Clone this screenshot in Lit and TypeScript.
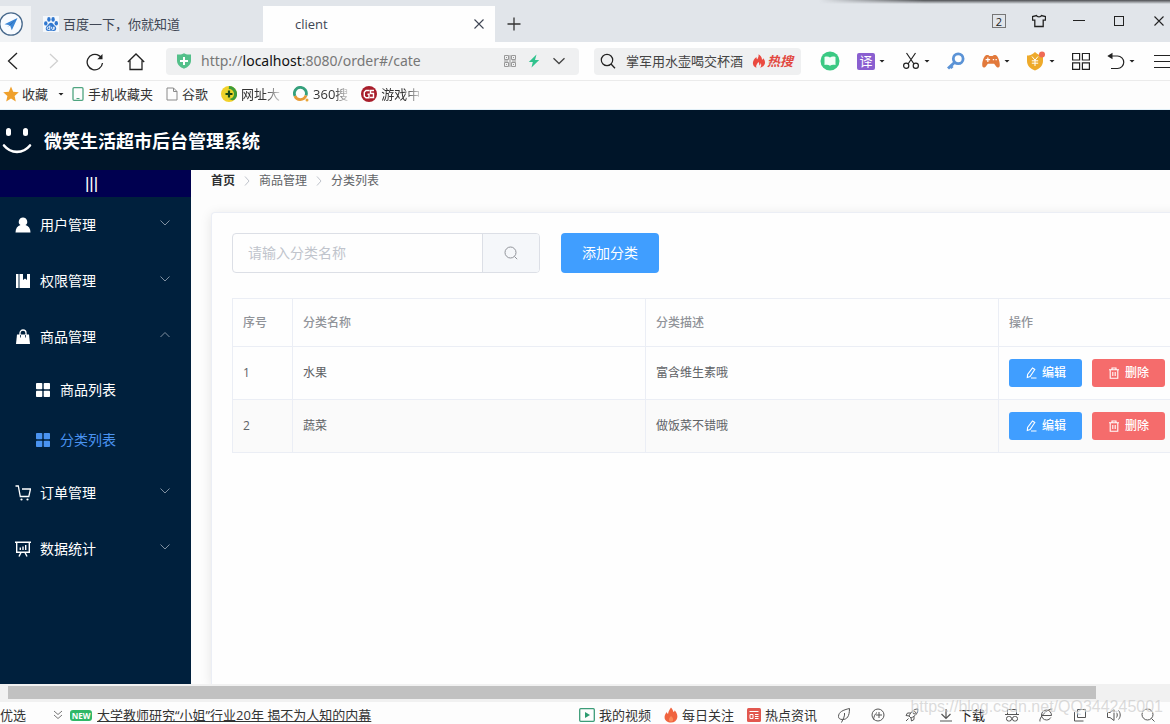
import { LitElement, html, svg, css, TemplateResult } from "lit";
import { customElement, state } from "lit/decorators.js";
import { classMap } from "lit/directives/class-map.js";

const icon = (w: number, h: number, body: TemplateResult, box = `0 0 ${w} ${h}`) =>
  html`<svg width=${w} height=${h} viewBox=${box} fill="none" stroke="currentColor" aria-hidden="true">${body}</svg>`;

const glyphs = {
  plane: icon(24, 24, svg`<circle cx="12" cy="12" r="11.2" fill="#f8fbff" stroke="#48698c" stroke-width="1.3"/><path d="M18.5 6 5.5 12.2l5.5 1 1.800 5z" fill="#3b86d6" stroke="none"/><path d="M18.5 6 11 13.2l-3 2z" fill="#1f5ea8" stroke="none"/>`),
  paw: icon(16, 16, svg`<rect width="16" height="16" fill="#f4f8fc" stroke="none"/><g fill="#3077cf" stroke="none"><ellipse cx="2.8" cy="7.4" rx="1.7" ry="2.2"/><ellipse cx="5.9" cy="3.4" rx="1.7" ry="2.3"/><ellipse cx="10.1" cy="3.4" rx="1.7" ry="2.3"/><ellipse cx="13.3" cy="7.2" rx="1.7" ry="2.2"/><path d="M8 6.8c-1.800 0-2.300 1.900-3.700 3-2.600 2-1.700 5.400 1 5.200 1.800-.2 3.600-.2 5.400 0 2.700.2 3.600-3.200 1-5.200-1.400-1.100-1.900-3-3.700-3z"/></g><path d="M6.800 9.500v4H5.500a1.200 1.200 0 0 1 0-2.600h1.300M8.700 10.800v1.700c0 1.300 2.200 1.300 2.200 0v-1.700 2.900" stroke="#fff" stroke-width=".9"/>`),
  close: icon(14, 14, svg`<path d="m2.500 2.500 9 9m0-9-9 9" stroke-width="1.100"/>`),
  plus: icon(14, 14, svg`<path d="M7 .5v13M.5 7h13" stroke-width="1.300"/>`),
  shirt: icon(14, 14, svg`<path d="M4.500 1.500c.7 1.800 4.300 1.800 5 0l4 1v3.700h-2.300v6.300H2.800V6.200H.5V2.500z" stroke-width="1.300"/>`),
  minimize: icon(14, 14, svg`<path d="M1 6.500h12"/>`),
  maximize: icon(14, 14, svg`<rect x="2.500" y="2.500" width="9" height="9"/>`),
  back: icon(18, 20, svg`<path d="m13 2-8.500 8 8.500 8" stroke-width="1.300"/>`),
  forward: icon(18, 20, svg`<path d="m5 3 7.500 7L5 17" stroke="#d0d0d0" stroke-width="1.300"/>`),
  reload: icon(18, 20, svg`<path d="M16.500 12A7.700 7.700 0 1 1 13 4.600l2 1.400" stroke-width="1.300"/><path d="M16.500 3v5.200h-5.200z" fill="currentColor" stroke="none"/>`),
  home: icon(18, 20, svg`<path d="M.8 11 9 3l8.200 8M3 9.500v9h12v-9" stroke-width="1.300"/>`),
  safe: icon(16, 16, svg`<path d="M1 1.500c4 .2 5 0 7-1.200 2 1.200 3 1.400 7 1.200v6c0 4-3 6.800-7 8.200-4-1.400-7-4.200-7-8.200z" fill="#54c08a" stroke="none"/><path d="M8 4v8M4 8h8" stroke="#fff" stroke-width="2"/>`),
  qr: icon(12, 12, svg`<g stroke="#999"><path d="M.5.5h4v4h-4zM7.500.5h4v4h-4zM.5 7.500h4v4h-4zM7.500 7.500h4v4h-4zM2 2.500h1M9 2.500h1M2 9.500h1M9 9.500h1M0 6h4M6 0v12M8 6h4"/></g>`),
  bolt: icon(12, 14, svg`<path d="M8.500.5.8 8h4L3.500 13.500 11.200 6H7z" fill="#2fc28d" stroke="none"/>`),
  chevron: icon(14, 14, svg`<path d="m1.500 4.200 5.500 5.300 5.500-5.300" stroke="#444" stroke-width="1.300"/>`),
  search: icon(16, 16, svg`<circle cx="7" cy="7" r="5.700" stroke-width="1.200"/><path d="m11 11 4 4.200" stroke-width="1.300"/>`),
  hot: icon(14, 14, svg`<path d="M6.500.3c.5 3-1 3.500-1 5C4.300 5 4.500 3.500 4.500 3 2 5 .5 7.500 1 10c.3 2 2 3.500 3.500 3.800C3.500 11.500 5 10 6.500 8c1 1.500.5 2.500 1 3.500 1-.5 1-1.700 1-2.500 1.200 1.700.8 3.300-.3 4.700C11 13 13 11 13 8.500c0-2-1-3-1.500-4.200-.5.700-.7 1.200-1.500 1.500C10 3.500 8.500 1.500 6.500.3z" fill="#ea4a40" stroke="none"/>`),
  reader: icon(20, 20, svg`<circle cx="10" cy="10" r="9.500" fill="#3ac983" stroke="none"/><path d="M4.500 6c2-.7 4-.7 5.500.5 1.500-1.200 3.500-1.200 5.500-.5v8c-2-.6-4-.5-5.500.7-1.500-1.200-3.500-1.300-5.500-.7z" fill="#f2fff8" stroke="none"/>`),
  scissors: icon(18, 18, svg`<path d="M4.500 1 12 12M13.500 1 6 12" stroke-width="1.200"/><circle cx="4.200" cy="13.800" r="2.600" stroke-width="1.200"/><circle cx="13.800" cy="13.800" r="2.600" stroke-width="1.200"/>`),
  key: icon(18, 18, svg`<circle cx="11.200" cy="6.800" r="4.900" stroke="#5b93d6" stroke-width="2.800"/><path d="m7.500 10.500-6.500 6M3.500 14l2 2" stroke="#5b93d6" stroke-width="3"/>`),
  pad: icon(18, 18, svg`<path d="M4 3c2-1.200 3.500-.3 4.200.4h3.600C12.500 2.700 14 1.800 16 3c2.300 1.500 4.500 9 3.500 12-.8 2-3 1.300-4-.3L13.500 12h-7l-2 2.700c-1 1.600-3.200 2.300-4 .3C-.5 12 1.700 4.500 4 3z" fill="#e2793b" stroke="none"/><path d="M6.500 5v5M4 7.500h5M12 7.500h1.500M15 7.500h1.500" stroke="#fff" stroke-width="1.300"/>`, "0 0 20 18"),
  coin: icon(18, 20, svg`<path d="M0 4.500c4 0 5.500-1.500 8-3.500 2.500 2 4 3.500 8 3.500V10c0 5-3.500 7.500-8 9.500-4.500-2-8-4.500-8-9.500z" fill="#eeaa2b" stroke="none"/><path d="m5 5.500 3 3.700 3-3.700M8 9v6M4.800 9.800h6.400M4.800 12.200h6.400" stroke="#fff"/><circle cx="15" cy="3.500" r="3" fill="#ef6a55" stroke="none"/>`),
  apps: icon(18, 18, svg`<path d="M.6 1.500h7v6.500h-7zM10.400 1.500h7v6.500h-7zM.6 10.900h7v6.500h-7zM10.400 10.900h7v6.500h-7z" stroke-width="1.200"/>`),
  undo: icon(18, 18, svg`<path d="M2 4h8.500a5.800 5.800 0 0 1 0 12.500H4" stroke-width="1.200"/><path d="M5.500.8v6.400L.3 4z" fill="currentColor" stroke="none"/>`),
  burger: icon(18, 18, svg`<path d="M2 3.500h16M2 9.500h16M2 15.500h16" stroke-width="1.200"/>`),
  star: icon(16, 16, svg`<path d="m8 .5 2.200 5.200 5.600.5-4.200 3.700 1.200 5.500L8 12.500l-4.800 2.900 1.200-5.500L.2 6.200l5.600-.5z" fill="#efa02c" stroke="none"/>`),
  phone: icon(12, 14, svg`<rect x="1" y=".7" width="10" height="12.600" rx="1" stroke="#4fa580" stroke-width="1.300"/><path d="M4.500 11.500h3" stroke="#4fa580"/>`),
  page: icon(12, 14, svg`<path d="M1 1h6.500L11 4.500V13H1zM7.500 1v3.500H11" stroke="#8a8a8a"/>`),
  nav360: icon(16, 16, svg`<circle cx="8" cy="8" r="8" fill="#f2d12a" stroke="none"/><path d="M8 0a8 8 0 0 1 6 13.300C12 15 9 14 7 12z" fill="#3d9c3a" stroke="none"/><circle cx="8" cy="8" r="5" fill="#e9d62c" stroke="none"/><path d="M8 4.500v7M4.500 8h7" stroke="#1c4a16" stroke-width="2.200"/>`),
  so: icon(16, 16, svg`<path d="M2 10a6 6 0 1 1 11-.5" stroke="#35a07c" stroke-width="2.800"/><path d="M2 10c1.500 4.500 8.500 5.200 11-.5" stroke="#e79a35" stroke-width="2.800"/><circle cx="14" cy="14" r="1.500" fill="#e9a63a" stroke="none"/>`),
  game: icon(16, 16, svg`<circle cx="8" cy="8" r="8" fill="#a81e2b" stroke="none"/><path d="M8.500 4.500H5L3.300 6.200v4L5 11.700h3V8.300H6.500M13 4.500h-3.500v3h3v4H9" stroke="#fff" stroke-width="1.400"/>`),
  smile: icon(32, 30, svg`<g fill="#fff" stroke="none"><rect x="6" y="2" width="5" height="8" rx="2.500"/><rect x="23" y="2" width="5" height="8" rx="2.500"/></g><path d="M4 19.500c7 8.500 19 8.500 26 0" stroke="#fff" stroke-width="2.600" stroke-linecap="round"/>`),
  user: icon(16, 16, svg`<path d="M8 .5a4.200 4.200 0 0 1 2.500 7.600C13.500 9 15.500 11.500 15.500 15.500H.5C.5 11.500 2.500 9 5.500 8.100A4.200 4.200 0 0 1 8 .5z" fill="#fff" stroke="none"/>`),
  book: icon(16, 16, svg`<path d="M1 1h2.500v14H1zM4.500 1H8v6l2-1.500L12 7V1h3v14H4.500z" fill="#fff" stroke="none"/>`),
  bag: icon(16, 16, svg`<path d="M2 5.500h12l1 9.500H1z" fill="#fff" stroke="none"/><path d="M5 8V4a3 3 0 0 1 6 0v4" stroke="#fff" stroke-width="1.300"/><path d="M5.500 6v2.500M10.500 6v2.500" stroke="#00203d" stroke-width=".8"/>`),
  tiles: icon(16, 16, svg`<g fill="currentColor" stroke="none"><rect x="1" y="1" width="6.300" height="6.300" rx=".8"/><rect x="8.700" y="1" width="6.300" height="6.300" rx=".8"/><rect x="1" y="8.700" width="6.300" height="6.300" rx=".8"/><rect x="8.700" y="8.700" width="6.300" height="6.300" rx=".8"/></g>`),
  cart: icon(16, 16, svg`<path d="M.5 1h2.800l2 10.500h8.500l1.700-7.500H7" stroke="#fff" stroke-width="1.300"/><circle cx="6.500" cy="14.500" r="1.100" fill="#fff" stroke="none"/><circle cx="12.500" cy="14.500" r="1.100" fill="#fff" stroke="none"/>`),
  board: icon(16, 16, svg`<path d="M0 1.200h16M1.700 1.500v9.800h12.600V1.500M6 11.500l-2 4M10 11.500l2 4M5.300 9V6.500M8 9V5.500M10.700 9V4" stroke="#fff" stroke-width="1.400"/>`),
  down: icon(12, 12, svg`<path d="m1.500 3.500 4.500 4.500 4.500-4.500" stroke="#7f8fa0"/>`),
  up: icon(12, 12, svg`<path d="m1.500 8 4.500-4.500 4.500 4.500" stroke="#7f8fa0"/>`),
  right: icon(12, 12, svg`<path d="m4 1.500 4 4.500-4 4.500" stroke="#c0c4cc"/>`),
  find: icon(14, 14, svg`<circle cx="6.500" cy="6.500" r="5.500" stroke="#909399"/><path d="m10.500 10.500 2.700 2.700" stroke="#909399"/>`),
  edit: icon(12, 12, svg`<path d="m7.500 1 2.300 1.500-4.700 7-2.800 1 .3-3zM6 11h5.500" stroke-width="1.100"/>`),
  trash: icon(12, 12, svg`<path d="M1 2.800h10M4 2.500V1h4v1.500M2.200 3v8.200h7.600V3M4.800 5v4M7.200 5v4" stroke-width="1.100"/>`),
  dbl: icon(10, 10, svg`<path d="m1 1 4 3.500L9 1M1 5l4 3.500L9 5" stroke="#777"/>`),
  video: icon(16, 14, svg`<rect x=".7" y=".7" width="14.600" height="12.600" rx="1" stroke="#3c9c78" stroke-width="1.300"/><path d="m6 4 5 3-5 3z" fill="#2c9b70" stroke="none"/>`),
  flame: icon(14, 16, svg`<path d="M7 .5c2 2 2 3.500 2.500 4.500.8-.3 1.200-1 1.200-1.800C13 6 13.800 8.500 13.200 11c-.6 2.500-2.700 4.500-6.200 4.500S1 13.500.6 11C.3 8.500 1.500 6.500 2.800 5c.2 1 .5 1.500 1.200 2C4.500 4 5.500 2.500 7 .5z" fill="#f0643f" stroke="none"/><path d="M7 9c1.500 1.500 2.500 2.500 2 4.500-.5 1.300-3.500 1.300-4 0C4.500 11.500 6 10.500 7 9z" fill="#fa8a5a" stroke="none"/>`),
  news: icon(14, 14, svg`<rect width="14" height="14" rx="1.500" fill="#e2574f" stroke="none"/><path d="M2.500 3.500h9M3 6.500h3v4H3zM8 6.500h3.500M8 8.500h3.500M8 10.500h3.500" stroke="#fff"/>`),
  leaf: icon(14, 16, svg`<path d="M12.500 1.500C6 3 1.500 5 1.500 9.500c0 2 1.500 3 4 3 4.500 0 7-3 7-11zM7.500 6c.5 3-1 5-3 9.500"/>`),
  boost: icon(14, 14, svg`<circle cx="7" cy="7" r="6"/><path d="M8 4v6M5 7h6M2.500 11.500C3 8 4 6 6 4.500"/>`),
  rocket: icon(14, 14, svg`<path d="M13 1C9 1 6 3.500 4 8l2 2c4.500-2 7-5 7-9zM5.500 5H2.500L1 7.500l3 .5M9 8.500v3L6.500 13 6 10M1 13l2.500-2.500"/><circle cx="9.300" cy="4.700" r="1.200"/>`),
  download: icon(14, 14, svg`<path d="M7 1v9M2.500 6 7 10.500 11.500 6M1 13h12" stroke-width="1.200"/>`),
  spy: icon(14, 14, svg`<path d="M0 6.500h14M2.500 6V1.500h9V6"/><rect x="1.500" y="8.500" width="5" height="4.500" rx="2"/><rect x="7.500" y="8.500" width="5" height="4.500" rx="2"/>`),
  ie: icon(14, 14, svg`<path d="M3 7.500h9.500C12.500 4.500 10.500 2 7.500 2S2.500 4.500 2.500 7s2 5 5 5c2 0 3.500-1 4.300-2.500M1 13.500C-.5 10 8 .5 13.500 1"/>`),
  copy: icon(14, 14, svg`<path d="M4.500 1.500h8v8h-8zM1.500 4v9h9"/>`),
  sound: icon(14, 14, svg`<path d="M.5 4.500h2.500l4-3v11l-4-3H.5zM9.500 4.500c1 1.500 1 3.500 0 5M11.500 2.500c2.300 2.500 2.300 6.500 0 9"/>`),
  lens: icon(14, 14, svg`<circle cx="6.500" cy="6.500" r="5.500"/><path d="m10.500 10.500 3 3"/>`),
};

interface MenuEntry {
  label: string;
  glyph: TemplateResult;
  children?: string[];
}

@customElement("app-root")
export class AppRoot extends LitElement {
  @state() private open = "商品管理";
  @state() private current = "分类列表";

  private readonly menu: MenuEntry[] = [
    { label: "用户管理", glyph: glyphs.user },
    { label: "权限管理", glyph: glyphs.book },
    { label: "商品管理", glyph: glyphs.bag, children: ["商品列表", "分类列表"] },
    { label: "订单管理", glyph: glyphs.cart },
    { label: "数据统计", glyph: glyphs.board },
  ];

  private readonly rows = [
    { name: "水果", note: "富含维生素哦" },
    { name: "蔬菜", note: "做饭菜不错哦" },
  ];

  static styles = css`
    :host {
      display: flex;
      flex-direction: column;
      height: 100vh;
      overflow: hidden;
      position: relative;
      background: #fdfdfd;
      color: #333;
      font: 13px/20px "Open Sans", "Noto Sans CJK SC", sans-serif;
      white-space: nowrap;
    }
    * { box-sizing: border-box; }
    svg { display: block; flex: none; }
    button {
      display: flex;
      align-items: center;
      padding: 0;
      border: 0;
      background: none;
      color: inherit;
      font: inherit;
      cursor: pointer;
    }
    a { color: inherit; text-decoration: none; }
    input { min-width: 0; border: 0; outline: 0; background: none; font: inherit; color: inherit; }

    .titlebar {
      flex: none;
      display: flex;
      height: 42px;
      padding: 6px 4px 0 0;
      background: #e1e5ea;
    }
    .shade {
      position: absolute;
      top: 0;
      right: 0;
      width: 30%;
      height: 4px;
      background: linear-gradient(to bottom, #4b4d50, #4b4d5000);
      mask-image: linear-gradient(to right, transparent, #000 30%);
    }
    .pinned { display: flex; align-items: center; justify-content: flex-end; width: 31px; padding-right: 8px; background: #f1f3f5; }
    .tab { display: flex; align-items: center; gap: 4px; width: 232px; padding: 0 9px 0 12px; color: #3f4654; }
    .tab.active { padding-left: 32px; background: #fefefe; }
    .tab .close { margin-left: auto; }
    .add { margin-left: 12px; }
    .controls { display: flex; align-items: center; gap: 26px; height: 30px; margin-left: auto; color: #222; }
    .count { width: 14px; height: 14px; border: 1px solid #777; font-size: 11px; line-height: 13px; text-align: center; }

    .toolbar { flex: none; display: flex; align-items: center; height: 39px; border-bottom: 1px solid #ebebeb; background: #fefefe; color: #222; }
    .nav { display: flex; gap: 23px; padding: 0 21px 0 4px; }
    .field { display: flex; align-items: center; height: 27px; border-radius: 4px; background: #eff0f1; }
    .address { flex: 1; margin-right: 15px; padding: 0 13px 0 10px; }
    .url { flex: 1; margin-left: 9px; color: #777; font-family: "Noto Sans", sans-serif; font-size: 14px; }
    .url b { font-weight: 400; color: #111; }
    .address button { margin-left: 12px; }
    .query { width: 207px; margin-right: 19px; padding: 0 8px 0 6px; }
    .query input { flex: 1; margin-left: 10px; padding: 0; color: #444; }
    .trend { display: flex; align-items: center; gap: 1px; color: #e2483f; font-weight: 700; font-style: italic; }
    .tools { display: flex; align-items: center; gap: 17px; }
    .tool { gap: 4px; }
    .caret { width: 6px; height: 3px; flex: none; background: #222; clip-path: polygon(0 0, 100% 0, 50% 100%); }
    .translate { width: 18px; height: 17px; border-radius: 2px; background: #8a5fd0; color: #fff; line-height: 16px; text-align: center; }

    .bookmarks { flex: none; display: flex; align-items: center; height: 29px; padding: 0 0 2px 3px; border-bottom: 1px solid #e2f0f8; color: #333; }
    .mark { display: flex; align-items: center; gap: 4px; margin-right: 13px; }
    .mark span { overflow: hidden; }
    .mark .cut { max-width: 39px; mask-image: linear-gradient(to right, #000 60%, #0003); }
    .mark.fav { gap: 3px; margin-right: 8px; }
    .mark.fav .caret { margin-left: 7px; }

    header { flex: none; display: flex; align-items: center; gap: 12px; height: 60px; padding-top: 2px; background: #001529; color: #fff; }
    h1 { margin: 0; font-size: 18px; line-height: 28px; }
    .body { flex: 1; display: flex; min-height: 0; overflow: hidden; }
    aside { flex: none; width: 191px; background: #00203d; color: #fff; font-size: 14px; }
    .collapse { width: 100%; height: 27px; justify-content: center; padding-right: 8px; background: #000050; font: 17px/27px "Liberation Sans", sans-serif; }
    .item { width: 100%; height: 56px; gap: 9px; padding: 0 20px 0 15px; }
    .item span { flex: 1; text-align: left; }
    .item > svg:last-child { margin-bottom: 4px; }
    .sub { height: 50px; padding-left: 35px; }
    .sub.on { color: #4a93f0; }

    main { flex: 1 0 1202px; display: flex; flex-direction: column; min-width: 0; padding: 0 20px; font-size: 12px; color: #606266; }
    .crumbs { display: flex; align-items: center; gap: 6px; height: 22px; margin-bottom: 20px; }
    .crumbs a { color: #303133; font-weight: 700; }
    .card { flex: 1; padding: 20px; border: 1px solid #ebeef5; border-bottom: 0; border-radius: 4px 4px 0 0; box-shadow: 0 2px 12px #0000001a; background: #fefefe; }
    .actions { display: flex; gap: 21px; height: 40px; margin-bottom: 25px; font-size: 14px; }
    .filter { display: flex; width: 308px; border: 1px solid #dcdfe6; border-radius: 4px; overflow: hidden; }
    .filter input { flex: 1; padding: 0 15px; }
    .filter input::placeholder { color: #c0c4cc; }
    .filter button { width: 57px; justify-content: center; border-left: 1px solid #dcdfe6; background: #f5f7fa; }
    .primary { justify-content: center; border-radius: 4px; background: #409eff; color: #fff; }
    .create { width: 98px; }
    table { width: 100%; table-layout: fixed; border: solid #ebeef5; border-width: 1px 0 0 1px; border-spacing: 0; }
    th, td { height: 53px; padding: 0 10px; border: solid #ebeef5; border-width: 0 1px 1px 0; text-align: left; }
    th { height: 48px; color: #909399; font-weight: 500; }
    tr:nth-child(even) td { background: #fafafa; }
    .index { width: 60px; }
    .ops { display: flex; gap: 10px; }
    .ops button { width: 73px; height: 28px; justify-content: center; gap: 5px; border-radius: 3px; font-weight: 500; }
    .danger { background: #f56c6c; color: #fff; }

    .scroll { flex: none; height: 18px; padding: 2px 74px 3px 8px; background: #f1f1f1; }
    .thumb { height: 13px; background: #c1c1c1; }
    footer { flex: none; display: flex; align-items: center; height: 22px; padding: 4px 15px 0 0; background: #fdfdfd; color: #333; }
    .fold { margin: 0 7px 0 27px; }
    .new { width: 22px; margin-right: 5px; border-radius: 3px; background: #2fb867; color: #fff; font-size: 8px; font-weight: 700; line-height: 11px; text-align: center; }
    footer a { text-decoration: underline; }
    .links { display: flex; gap: 13px; margin-left: auto; margin-right: 20px; }
    .links button { gap: 4px; }
    .utils { display: flex; align-items: center; gap: 20px; color: #555; }
    .utils button { gap: 6px; }
    .utils span { color: #222; }
    .watermark { position: absolute; right: 7px; bottom: 7px; color: #c4c4c499; text-shadow: 1px 1px 0 #ffffff99; font: 16px/20px "Liberation Sans", sans-serif; pointer-events: none; }
  `;

  private tool(label: string, glyph: TemplateResult, menu = false) {
    return html`<button class="tool" aria-label=${label}>${glyph}${menu ? html`<i class="caret"></i>` : ""}</button>`;
  }

  private mark(label: string, glyph: TemplateResult, cut = false) {
    return html`<a class="mark" href="#">${glyph}<span class=${classMap({ cut })}>${label}</span></a>`;
  }

  private entry(e: MenuEntry) {
    const opened = e.label === this.open;
    return html`
      <button class="item" aria-expanded=${opened} @click=${() => (this.open = opened ? "" : e.label)}>
        ${e.glyph}<span>${e.label}</span>${opened ? glyphs.up : glyphs.down}
      </button>
      ${opened
        ? e.children?.map(
            (c) => html`<button class=${classMap({ item: true, sub: true, on: c === this.current })} @click=${() => (this.current = c)}>
              ${glyphs.tiles}<span>${c}</span>
            </button>`
          )
        : ""}
    `;
  }

  render() {
    return html`
      <div class="titlebar">
        <div class="pinned">${glyphs.plane}</div>
        <div class="tab">${glyphs.paw}<span>百度一下，你就知道</span></div>
        <div class="tab active"><span>client</span><button class="close" aria-label="关闭标签">${glyphs.close}</button></div>
        <button class="add" aria-label="新标签">${glyphs.plus}</button>
        <div class="controls">
          <span class="count">2</span>
          <button aria-label="皮肤">${glyphs.shirt}</button>
          <button aria-label="最小化">${glyphs.minimize}</button>
          <button aria-label="最大化">${glyphs.maximize}</button>
          <button aria-label="关闭">${glyphs.close}</button>
        </div>
        <div class="shade"></div>
      </div>

      <div class="toolbar">
        <div class="nav">
          <button aria-label="后退">${glyphs.back}</button>
          <button aria-label="前进">${glyphs.forward}</button>
          <button aria-label="刷新">${glyphs.reload}</button>
          <button aria-label="主页">${glyphs.home}</button>
        </div>
        <div class="field address">
          ${glyphs.safe}
          <span class="url">http://<b>localhost</b>:8080/order#/cate</span>
          <button aria-label="二维码">${glyphs.qr}</button>
          <button aria-label="极速模式">${glyphs.bolt}</button>
          <button aria-label="展开">${glyphs.chevron}</button>
        </div>
        <div class="field query">
          ${glyphs.search}
          <input aria-label="搜索" value="掌军用水壶喝交杯酒" />
          <span class="trend">${glyphs.hot}热搜</span>
        </div>
        <div class="tools">
          ${this.tool("阅读", glyphs.reader)}
          ${this.tool("翻译", html`<span class="translate">译</span>`, true)}
          ${this.tool("截图", glyphs.scissors, true)}
          ${this.tool("密码", glyphs.key)}
          ${this.tool("游戏", glyphs.pad, true)}
          ${this.tool("支付", glyphs.coin, true)}
          ${this.tool("应用", glyphs.apps)}
          ${this.tool("恢复", glyphs.undo, true)}
          ${this.tool("菜单", glyphs.burger)}
        </div>
      </div>

      <nav class="bookmarks">
        <a class="mark fav" href="#">${glyphs.star}<span>收藏</span><i class="caret"></i></a>
        ${this.mark("手机收藏夹", glyphs.phone)}
        ${this.mark("谷歌", glyphs.page)}
        ${this.mark("网址大", glyphs.nav360, true)}
        ${this.mark("360搜", glyphs.so, true)}
        ${this.mark("游戏中", glyphs.game, true)}
      </nav>

      <header>${glyphs.smile}<h1>微笑生活超市后台管理系统</h1></header>

      <div class="body">
        <aside>
          <button class="collapse" aria-label="折叠菜单">|||</button>
          ${this.menu.map((e) => this.entry(e))}
        </aside>
        <main>
          <div class="crumbs"><a href="#">首页</a>${glyphs.right}<span>商品管理</span>${glyphs.right}<span>分类列表</span></div>
          <section class="card">
            <div class="actions">
              <div class="filter">
                <input aria-label="分类名称" placeholder="请输入分类名称" />
                <button aria-label="查询">${glyphs.find}</button>
              </div>
              <button class="primary create">添加分类</button>
            </div>
            <table>
              <thead>
                <tr><th class="index">序号</th><th>分类名称</th><th>分类描述</th><th>操作</th></tr>
              </thead>
              <tbody>
                ${this.rows.map(
                  (r, i) => html`<tr>
                    <td>${i + 1}</td>
                    <td>${r.name}</td>
                    <td>${r.note}</td>
                    <td>
                      <div class="ops">
                        <button class="primary">${glyphs.edit}编辑</button>
                        <button class="danger">${glyphs.trash}删除</button>
                      </div>
                    </td>
                  </tr>`
                )}
              </tbody>
            </table>
          </section>
        </main>
      </div>

      <div class="scroll"><div class="thumb"></div></div>
      <footer>
        <span>优选</span>
        <button class="fold" aria-label="更多">${glyphs.dbl}</button>
        <span class="new">NEW</span>
        <a href="#">大学教师研究“小姐”行业20年 揭不为人知的内幕</a>
        <div class="links">
          <button>${glyphs.video}我的视频</button>
          <button>${glyphs.flame}每日关注</button>
          <button>${glyphs.news}热点资讯</button>
        </div>
        <div class="utils">
          <button aria-label="清理">${glyphs.leaf}</button>
          <button aria-label="加速球">${glyphs.boost}</button>
          <button aria-label="加速器">${glyphs.rocket}</button>
          <button>${glyphs.download}<span>下载</span></button>
          <button aria-label="无痕">${glyphs.spy}</button>
          <button aria-label="浏览器模式">${glyphs.ie}</button>
          <button aria-label="分屏">${glyphs.copy}</button>
          <button aria-label="声音">${glyphs.sound}</button>
          <button aria-label="缩放">${glyphs.lens}</button>
        </div>
      </footer>
      <div class="watermark">https://blog.csdn.net/QQ344245001</div>
    `;
  }
}
